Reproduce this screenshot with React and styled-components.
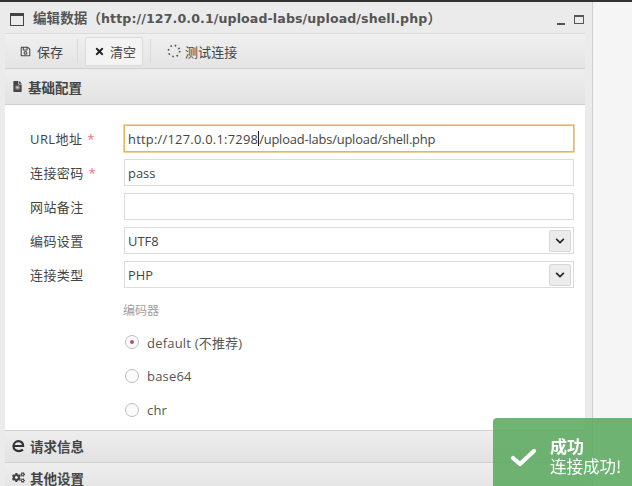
import React from "react";
import styled, { createGlobalStyle } from "styled-components";
import { FaRegSave, FaTimes, FaFileAlt, FaCogs, FaChevronDown } from "react-icons/fa";

const SANS = `"DejaVu Sans", "Noto Sans CJK SC", sans-serif`;
const UI = `"Open Sans", "Noto Sans CJK SC", sans-serif`;

const GlobalStyle = createGlobalStyle`
  html, body {
    margin: 0;
    padding: 0;
    width: 632px;
    height: 486px;
    overflow: hidden;
    background: #f5f5f5;
  }
  * { box-sizing: border-box; }
`;

const Page = styled.div`
  position: relative;
  width: 632px;
  height: 486px;
  overflow: hidden;
  border-top: 2px solid #333;
  filter: blur(0.5px);
  font-family: ${UI};
`;

const Win = styled.div`
  width: 593px;
  height: 484px;
  padding: 0 7px 0 5px;
  background: #ebebeb;
  border-right: 1px solid #d0d0d0;
`;

const TitleBar = styled.div`
  display: flex;
  align-items: center;
  height: 31px;
  padding: 0 0 2px 5px;
`;

const WinIcon = styled.span`
  width: 14px;
  height: 13px;
  margin: 6px 9px 0 0;
  border: 1.5px solid #444;
  border-top-width: 3px;
`;

const Title = styled.div`
  flex: 1;
  font: bold 12.6px ${SANS};
  letter-spacing: 0.1px;
  color: #555;
  white-space: nowrap;
`;

const TitleCjk = styled.span`
  font-size: 13.5px;
`;

const WinButtons = styled.div`
  display: flex;
  align-items: center;
  gap: 9px;
  margin: 6px 1px 0 0;
`;

const MinBtn = styled.span`
  width: 8px;
  height: 2px;
  margin-top: 8px;
  background: #555;
`;

const MaxBtn = styled.span`
  width: 10px;
  height: 9px;
  border: 1px solid #555;
  border-top-width: 2px;
`;

const Toolbar = styled.div`
  display: flex;
  align-items: center;
  height: 36px;
  padding-left: 3px;
  background: linear-gradient(#f0f0f0, #e4e4e4);
  border-top: 1px solid #dcdcdc;
  border-bottom: 1px solid #d2d2d2;
`;

const ToolBtn = styled.div`
  display: flex;
  align-items: center;
  gap: ${(p) => p.$gap}px;
  width: ${(p) => p.$w}px;
  height: 29px;
  padding-left: ${(p) => p.$pl}px;
  border: 1px solid ${(p) => (p.$active ? "#dadada" : "transparent")};
  border-radius: 2px;
  background: ${(p) => (p.$active ? "#f3f3f3" : "transparent")};
  font-size: 13px;
  letter-spacing: 0.1px;
  color: #444;
  svg { flex: none; }
`;

const Sep = styled.span`
  width: 1px;
  height: 24px;
  margin: 0 ${(p) => p.$r}px 0 ${(p) => p.$l}px;
  background: #d6dadc;
`;

const Header = styled.div`
  display: flex;
  align-items: center;
  gap: 5px;
  height: ${(p) => p.$h}px;
  margin-top: ${(p) => p.$mt || 0}px;
  padding: 0 0 2px 7px;
  background: linear-gradient(#eeeeee, #e2e2e2);
  border-bottom: 1px solid #cfcfcf;
  font-size: 13.5px;
  font-weight: 600;
  color: #444;
  svg { flex: none; }
`;

const Form = styled.div`
  height: 326px;
  padding: 20px 11px 0 24px;
  background: #fff;
  border-bottom: 1px solid #cfcfcf;
`;

const Row = styled.div`
  display: flex;
  align-items: center;
  height: 27px;
  margin-bottom: 7px;
`;

const Label = styled.div`
  width: 95px;
  flex: none;
  padding-left: 1px;
  font-size: 13px;
  letter-spacing: 0.4px;
  color: #444;
`;

const Star = styled.span`
  margin-left: 5px;
  color: #ea7377;
`;

const Field = styled.div`
  position: relative;
  flex: 1;
  display: flex;
  align-items: center;
  height: 27px;
  padding-left: 3px;
  border: 1px solid #dcdcdc;
  border-width: ${(p) => (p.$focus ? "1px" : "1px 1px 1.5px 1px")};
  font-size: 12.9px;
  color: #444;
  ${(p) => p.$focus && "border-color: #e8b55f; box-shadow: 0 0 0 0.6px #e8b55f;"}
`;

const Typed = styled.span`
  letter-spacing: ${(p) => p.$ls}px;
`;

const Caret = styled.span`
  width: 1px;
  height: 15px;
  background: #222;
`;

const SelectBtn = styled.span`
  position: absolute;
  right: 2px;
  top: 2px;
  width: 22px;
  height: 22px;
  display: flex;
  align-items: center;
  justify-content: center;
  background: #ececec;
  border: 1px solid #d8d8d8;
  border-radius: 2px;
  color: #222;
`;

const Encoders = styled.div`
  margin: 13px 0 0 94px;
`;

const EncoderTitle = styled.div`
  margin-bottom: 13px;
  font-size: 12px;
  color: #a0a0a0;
`;

const RadioRow = styled.div`
  display: flex;
  align-items: center;
  gap: 8px;
  height: 20px;
  margin: 0 0 14px 2px;
  font-size: 13px;
  letter-spacing: 0.2px;
  color: #555;
`;

const Radio = styled.span`
  width: 14px;
  height: 14px;
  display: flex;
  align-items: center;
  justify-content: center;
  border: 1px solid #bdbdbd;
  border-radius: 50%;
  background: #fbfbfb;
  &::after {
    content: "";
    width: 4px;
    height: 4px;
    border-radius: 50%;
    background: ${(p) => (p.$on ? "#b5535a" : "transparent")};
  }
`;

const Toast = styled.div`
  position: absolute;
  left: 493px;
  top: 416px;
  width: 139px;
  height: 68px;
  display: flex;
  align-items: flex-start;
  padding: 17px 0 0 17px;
  gap: 13px;
  border-radius: 4px 0 0 0;
  background: rgba(92, 170, 96, 0.88);
  color: #fff;
`;

const ToastText = styled.div`
  font-family: "Noto Sans CJK SC", serif;
  font-size: 16.5px;
  line-height: 21px;
  white-space: nowrap;
`;

const ToastTitle = styled.div`
  font-size: 17px;
  font-weight: bold;
`;

const Spinner = () => (
  <svg width="16" height="16" viewBox="0 0 16 16">
    <circle cx="8" cy="8" r="5.6" fill="none" stroke="#555" strokeWidth="1.7" strokeDasharray="1.6 2.8" />
  </svg>
);

const Check = () => (
  <svg width="27" height="22" viewBox="0 0 27 22" style={{ marginTop: 11 }}>
    <path d="M3 12 L10 18 L24 5" fill="none" stroke="#fff" strokeWidth="4.2" strokeLinecap="round" strokeLinejoin="round" />
  </svg>
);

const EdgeIcon = () => (
  <svg width="13" height="14" viewBox="0 0 14 14">
    <path
      d="M2 7 H12 C12 3.6 9.8 1.8 7 1.8 C4 1.8 1.6 4.2 1.6 7.4 C1.6 10.4 4 12.4 7.4 12.4 C9 12.4 10.6 12 11.8 11"
      fill="none"
      stroke="#333"
      strokeWidth="2.4"
    />
  </svg>
);

const TextRow = ({ label, required, value, focus }) => (
  <Row>
    <Label>
      {label}
      {required && <Star>*</Star>}
    </Label>
    <Field $focus={focus}>
      {focus ? (
        <>
          <Typed $ls={0.24}>{value[0]}</Typed>
          <Caret />
          <Typed $ls={-0.18}>{value[1]}</Typed>
        </>
      ) : (
        value
      )}
    </Field>
  </Row>
);

const SelectRow = ({ label, value }) => (
  <Row>
    <Label>{label}</Label>
    <Field>
      {value}
      <SelectBtn>
        <FaChevronDown size={10} />
      </SelectBtn>
    </Field>
  </Row>
);

export default function App() {
  return (
    <Page>
      <GlobalStyle />
      <Win>
        <TitleBar>
          <WinIcon />
          <Title>
            <TitleCjk>编辑数据（</TitleCjk>http://127.0.0.1/upload-labs/upload/shell.php<TitleCjk>）</TitleCjk>
          </Title>
          <WinButtons>
            <MinBtn />
            <MaxBtn />
          </WinButtons>
        </TitleBar>
        <Toolbar>
          <ToolBtn $w={69} $pl={11} $gap={6}>
            <FaRegSave size={11} />
            保存
          </ToolBtn>
          <Sep $l={0} $r={7} />
          <ToolBtn $active $w={58} $pl={8} $gap={5}>
            <FaTimes size={11} color="#222" />
            清空
          </ToolBtn>
          <Sep $l={7} $r={6} />
          <ToolBtn $w={100} $pl={8} $gap={3}>
            <Spinner />
            测试连接
          </ToolBtn>
        </Toolbar>
        <Header $h={34} $mt={2}>
          <FaFileAlt size={11} />
          基础配置
        </Header>
        <Form>
          <TextRow label="URL地址" required focus value={["http://127.0.0.1:7298", "/upload-labs/upload/shell.php"]} />
          <TextRow label="连接密码" required value="pass" />
          <TextRow label="网站备注" value="" />
          <SelectRow label="编码设置" value="UTF8" />
          <SelectRow label="连接类型" value="PHP" />
          <Encoders>
            <EncoderTitle>编码器</EncoderTitle>
            <RadioRow>
              <Radio $on />
              default (不推荐)
            </RadioRow>
            <RadioRow>
              <Radio />
              base64
            </RadioRow>
            <RadioRow>
              <Radio />
              chr
            </RadioRow>
          </Encoders>
        </Form>
        <Header $h={32}>
          <EdgeIcon />
          请求信息
        </Header>
        <Header $h={32}>
          <FaCogs size={13} />
          其他设置
        </Header>
      </Win>
      <Toast>
        <Check />
        <ToastText>
          <ToastTitle>成功</ToastTitle>
          连接成功!
        </ToastText>
      </Toast>
    </Page>
  );
}
